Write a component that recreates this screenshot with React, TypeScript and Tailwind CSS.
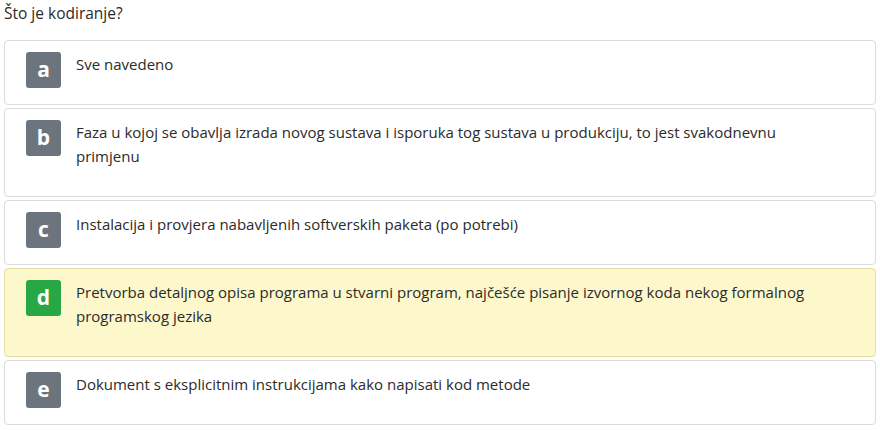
const answers = [
  { key: "a", text: "Sve navedeno" },
  {
    key: "b",
    text: "Faza u kojoj se obavlja izrada novog sustava i isporuka tog sustava u produkciju, to jest svakodnevnu primjenu",
  },
  { key: "c", text: "Instalacija i provjera nabavljenih softverskih paketa (po potrebi)" },
  {
    key: "d",
    text: "Pretvorba detaljnog opisa programa u stvarni program, najčešće pisanje izvornog koda nekog formalnog programskog jezika",
    correct: true,
  },
  { key: "e", text: "Dokument s eksplicitnim instrukcijama kako napisati kod metode" },
];

export default function App() {
  return (
    <div className="w-[880px] h-[430px] bg-white px-1 pt-[1px] text-[#2b2b2b] font-['Open_Sans',sans-serif] text-[15px]">
      <p className="leading-6 mb-[15px] text-[15.5px]">Što je kodiranje?</p>
      <div className="flex flex-col gap-[3px] w-[872px]">
        {answers.map((a) => (
          <div
            key={a.key}
            className={
              a.correct
                ? "flex border border-[#e5dca6] bg-[#fdf8cb] rounded pl-[21px] pr-4 pt-[11px] pb-3"
                : "flex border border-[#dcdcdc] bg-white rounded pl-[21px] pr-4 pt-[11px] pb-3"
            }
          >
            <span
              className={
                a.correct
                  ? "w-[35px] h-9 shrink-0 rounded-[3px] bg-[#28a745] text-white font-bold text-[21px] flex items-center justify-center"
                  : "w-[35px] h-9 shrink-0 rounded-[3px] bg-[#6c757d] text-white font-bold text-[21px] flex items-center justify-center"
              }
            >
              {a.key}
            </span>
            <p className="ml-[15px] leading-6 mb-4 pr-12">{a.text}</p>
          </div>
        ))}
      </div>
    </div>
  );
}
